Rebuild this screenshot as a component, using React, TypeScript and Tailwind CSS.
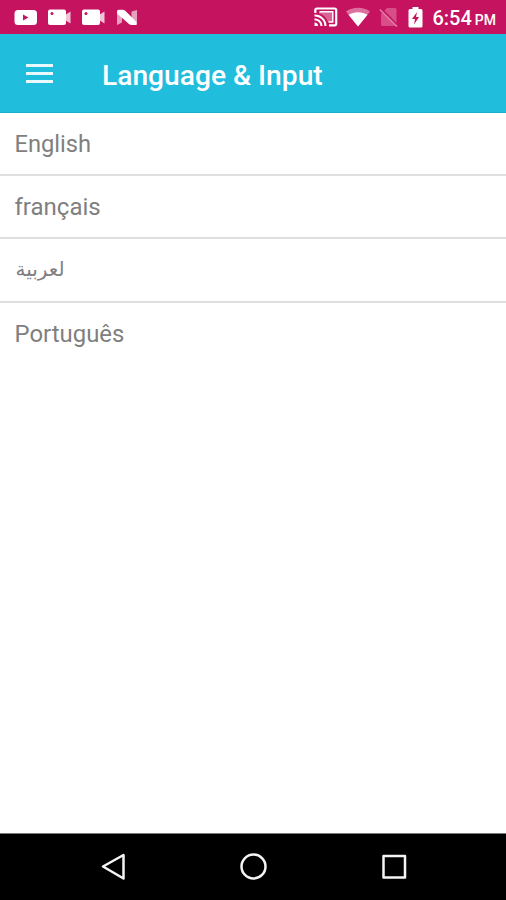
import React from "react";

const languages = [
  { label: "English", row: "h-[63px] border-b-2", text: "text-[23.7px] pt-[2px]" },
  { label: "français", row: "h-[63px] border-b-2", text: "text-[24px]" },
  { label: "لعربية", row: "h-[64px] border-b-2", text: "text-[20px] pb-[2px] pl-[1px]" },
  { label: "Português", row: "h-[63px]", text: "text-[23.9px]" },
];

function Camera() {
  return (
    <svg width="23" height="17" viewBox="0 0 23 17" className="shrink-0">
      <path d="M2 .5h14a2 2 0 0 1 2 2v11.500a2 2 0 0 1-2 2H2a2 2 0 0 1-2-2V2.500a2 2 0 0 1 2-2z" fill="#fff" />
      <path d="M17 6l5.500-3.500v12L17 11z" fill="#fff" opacity=".75" />
      <circle cx="4" cy="4.500" r="1.500" fill="#c5135f" />
    </svg>
  );
}

function StatusBar() {
  return (
    <div className="flex h-[34px] shrink-0 items-center bg-[#c5135f] text-white">
      <div className="flex items-center pl-[14px]">
        <svg width="24" height="17" viewBox="0 0 24 17" className="mr-[10px]">
          <rect x=".5" y="1" width="22.500" height="15" rx="3.500" fill="#fff" />
          <path d="M9 5.500v6l5.500-3z" fill="#c5135f" />
        </svg>
        <Camera />
        <div className="w-[11px]" />
        <Camera />
        <svg width="22" height="17" viewBox="0 0 22 17" className="ml-[11px]">
          <path d="M1 1.500h5v12l-5 2.500zM15.500 2.500l5.500-1.500v14.500l-5.500.5z" fill="#fff" opacity=".6" />
          <path d="M1 2.500Q1 .8 3 .8H6.500Q8 .8 9.500 2L20.500 13V16H15.500Q14 16 13 15L1 4.500z" fill="#fff" />
        </svg>
      </div>
      <div className="ml-auto flex items-center pr-[10px]">
        <svg width="24" height="20" viewBox="0 0 24 20" className="mr-[8px]" fill="none" stroke="#fff">
          <path d="M1.300 6V3a1.500 1.500 0 0 1 1.500-1.500h17.900A1.500 1.500 0 0 1 22.200 3v13.800a1.500 1.500 0 0 1-1.500 1.500H15" strokeWidth="2.200" />
          <path d="M5 5h14v10h-5C12.500 10.500 9.500 7.500 5 6.500z" fill="#fff" stroke="none" opacity=".35" />
          <path d="M5.500 4.800H18.800V15H14.500" strokeWidth="1.400" />
          <path d="M.5 8.500A10.500 10.500 0 0 1 11.500 19M.5 12.500A6.500 6.500 0 0 1 7.500 19" strokeWidth="2" />
          <path d="M.5 15.500A3.500 3.500 0 0 1 4 19H.5z" fill="#fff" stroke="none" />
        </svg>
        <svg width="25" height="20" viewBox="0 0 25 20" className="mr-[8px]">
          <path d="M0 4.500C7-.5 17-.5 24 4.500L12 19.500z" fill="#fff" opacity=".4" />
          <path d="M2.500 7.800C8 4.300 16 4.300 21.500 7.800L12 19.500z" fill="#fff" />
        </svg>
        <svg width="20" height="20" viewBox="0 0 20 20" className="mr-[9px]">
          <path d="M8 1h8a1.500 1.500 0 0 1 1.500 1.500v15a1.500 1.500 0 0 1-1.500 1.500H3.500A1.500 1.500 0 0 1 2 17.500V7z" fill="#d84e88" />
          <path d="M2 1.500L19 19" stroke="#c5135f" strokeWidth="2" />
          <path d="M.8 2.500L18 19.500" stroke="#e07ba4" strokeWidth="1.700" />
        </svg>
        <svg width="15" height="21" viewBox="0 0 15 21" className="mr-[9px]">
          <path d="M4.500 0h6v2H13a1.500 1.500 0 0 1 1.500 1.500v15.500a1.500 1.500 0 0 1-1.500 1.500H2A1.500 1.500 0 0 1 .5 19V3.500A1.500 1.500 0 0 1 2 2h2.500z" fill="#fff" />
          <path d="M9 5L4 12h3l-1 5.500L11 10H8z" fill="#c5135f" />
        </svg>
        <div className="flex items-baseline pt-[2px] text-[20px] leading-none font-medium whitespace-nowrap">
          <span>6:54</span>
          <span className="ml-[3px] text-[14px]">PM</span>
        </div>
      </div>
    </div>
  );
}

export default function App() {
  return (
    <div
      className="flex h-[900px] w-[506px] flex-col overflow-hidden bg-white"
      style={{ fontFamily: 'Roboto, "Noto Sans", "DejaVu Sans", sans-serif' }}
    >
      <StatusBar />
      <header className="flex h-[79px] shrink-0 items-center border-b border-[#17aecb] bg-[#20bddc] pl-[26px] text-white">
        <div className="flex w-[27px] flex-col gap-[5px]">
          <div className="h-[3px] bg-[#e6faff]" />
          <div className="h-[3px] bg-[#e6faff]" />
          <div className="h-[3px] bg-[#e6faff]" />
        </div>
        <h1 className="ml-[49px] pt-[7px] text-[28.2px] leading-none font-medium whitespace-nowrap">Language &amp; Input</h1>
      </header>
      <ul className="flex-1">
        {languages.map((l) => (
          <li key={l.label} className={`flex items-center border-[#dfdfdf] pl-[14.5px] text-[#7f7f7f] ${l.row}`}>
            <span className={`leading-none ${l.text}`}>{l.label}</span>
          </li>
        ))}
      </ul>
      <nav className="flex h-[67px] shrink-0 border-t border-[#777] bg-black">
        <svg width="506" height="66" viewBox="0 834 506 66" fill="none" stroke="#f4f4f4" strokeWidth="2.500" strokeLinejoin="round">
          <path d="M103 866.500L123.500 855v23.500z" />
          <circle cx="253.500" cy="866.500" r="12" />
          <rect x="383.500" y="856" width="21.500" height="21.500" />
        </svg>
      </nav>
    </div>
  );
}
